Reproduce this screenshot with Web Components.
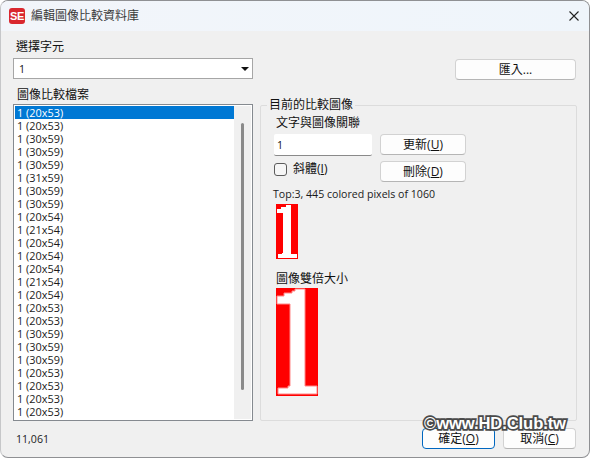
<!DOCTYPE html>
<html lang="zh-Hant">
<head>
<meta charset="utf-8">
<title>編輯圖像比較資料庫</title>
<style>
  html,body{margin:0;padding:0;background:#fff;}
  body{width:590px;height:458px;overflow:hidden;font:12px/14px "Open Sans","Noto Sans CJK TC",sans-serif;color:#111;}
  .u{text-decoration:underline;}
</style>
</head>
<body>
<se-dialog heading="編輯圖像比較資料庫">
  <se-panel>
    <se-label slot="left" style="padding-left:3px">選擇字元</se-label>
    <se-combo slot="left" value="1"></se-combo>
    <se-label slot="left" style="margin-top:9px;padding-left:4px">圖像比較檔案</se-label>
    <se-list slot="left" style="margin-top:2px"></se-list>

    <se-button slot="right" style="width:121px;margin:19px 1px 0 auto">匯入...</se-button>
    <se-group slot="right" legend="目前的比較圖像" style="margin-top:18px">
      <se-label style="margin-left:2px;margin-top:4px">文字與圖像關聯</se-label>
      <se-row style="margin-top:4px">
        <se-input value="1"></se-input>
        <se-button style="width:86px">更新(<span class="u">U</span>)</se-button>
      </se-row>
      <se-row style="margin-top:5px">
        <se-check>斜體(<span class="u">I</span>)</se-check>
        <se-button style="width:86px">刪除(<span class="u">D</span>)</se-button>
      </se-row>
      <se-label small style="margin-left:-1px;margin-top:5px">Top:3, 445 colored pixels of 1060</se-label>
      <se-bitmap style="margin:3px 0 0 2px"></se-bitmap>
      <se-label style="margin:13px 0 0 2px">圖像雙倍大小</se-label>
      <se-bitmap double style="margin:2px 0 0 2px"></se-bitmap>
    </se-group>

    <se-label slot="status" small>11,061</se-label>
    <se-button slot="actions" primary style="width:73px">確定(<span class="u">O</span>)</se-button>
    <se-button slot="actions" style="width:73px">取消(<span class="u">C</span>)</se-button>
  </se-panel>
  <se-watermark slot="overlay">©www.HD.Club.tw</se-watermark>
</se-dialog>

<script>
function def(name, css, html, init){
  customElements.define(name, class extends HTMLElement{
    constructor(){
      super();
      const r=this.attachShadow({mode:'open'});
      r.innerHTML='<style>'+css+'</style>'+(typeof html==='function'?html(this):html);
    }
    connectedCallback(){ if(init&&!this._i){this._i=1;init(this);} }
  });
}

def('se-dialog',`
  :host{display:block;position:relative;box-sizing:border-box;width:590px;height:458px;border:1px solid #8f9093;border-left-color:#c6c7c9;border-radius:8px;background:#f0f0f0;overflow:hidden;}
  .bar{display:flex;align-items:center;height:30px;background:linear-gradient(90deg,#f2f5fa,#eff5fb);}
  .logo{flex:none;display:flex;align-items:center;justify-content:center;width:16px;height:16px;margin:0 6px 0 8px;border-radius:3px;background:#d9272e;color:#fff;font:bold 11px/16px "Liberation Sans",sans-serif;letter-spacing:-.3px;}
  .title{flex:1;color:#3a3a3a;}
  svg{flex:none;margin-right:10px;}
`,h=>`<div class="bar"><span class="logo">SE</span><span class="title">${h.getAttribute('heading')}</span>
  <svg width="10" height="10" viewBox="0 0 10 10"><path d="M.5.5l9 9M9.5.5l-9 9" stroke="#222" stroke-width="1.1" fill="none"/></svg></div>
  <slot></slot><slot name="overlay"></slot>`);

def('se-panel',`
  :host{display:grid;grid-template-columns:240px 317px;column-gap:7px;padding:9px 0 0 12px;}
  .col{display:flex;flex-direction:column;min-width:0;}
  .foot{grid-column:1/3;display:flex;align-items:center;margin-top:7px;padding-left:3px;}
  .foot .s{flex:1;}
  .a{display:flex;gap:8px;margin-right:1px;}
  ::slotted(se-button){flex:none;}
`,`<div class="col"><slot name="left"></slot></div><div class="col"><slot name="right"></slot></div>
  <div class="foot"><div class="s"><slot name="status"></slot></div><div class="a"><slot name="actions"></slot></div></div>`);

def('se-label',`
  :host{display:block;line-height:14px;color:#111;}
  :host([small]){font-size:10.6px;color:#1a1a1a;}
`,`<slot></slot>`);

def('se-row',`:host{display:flex;align-items:flex-start;}`,`<slot></slot>`);

def('se-combo',`
  :host{display:flex;align-items:center;box-sizing:border-box;height:21px;margin-top:4px;padding:0 3px 0 5px;background:#fff;border:1px solid #a6a6a6;font-size:10.6px;}
  .v{flex:1;}
  i{width:0;height:0;border:4px solid transparent;border-top:4px solid #111;border-bottom:0;}
`,h=>`<span class="v">${h.getAttribute('value')}</span><i></i>`);

const sizes='20x53 20x53 30x59 30x59 30x59 31x59 30x59 30x59 20x54 21x54 20x54 20x54 20x54 21x54 20x54 20x53 20x53 30x59 30x59 30x59 20x53 20x53 20x53 20x53'.split(' ');
def('se-list',`
  :host{display:flex;box-sizing:border-box;height:317px;background:#fff;border:1px solid #858a90;padding:1px;overflow:hidden;font-size:10.9px;}
  .rows{width:219px;flex:none;}
  .r{height:13px;line-height:13px;padding-left:2px;color:#1a1a1a;white-space:nowrap;}
  .r.sel{background:#0078d4;color:#fff;}
  .track{flex:1;display:flex;justify-content:center;background:#f0f0f0;padding-top:17px;}
  .thumb{width:3px;height:267px;background:#8a8a8a;border-radius:2px;}
`,()=>`<div class="rows">${sizes.map((s,i)=>`<div class="r${i?'':' sel'}">1 (${s})</div>`).join('')}</div><div class="track"><div class="thumb"></div></div>`);

def('se-button',`
  :host{display:flex;align-items:center;justify-content:center;box-sizing:border-box;height:21px;background:#fdfdfd;border:1px solid #d2d2d2;border-bottom-color:#b5b5b5;border-radius:4px;color:#111;}
  :host([primary]){border:1px solid #0067c0;}
`,`<slot></slot>`);

def('se-group',`
  :host{display:block;}
  fieldset{box-sizing:border-box;height:323px;margin:0;padding:0;border:1px solid #dcdcdc;border-radius:2px;min-width:0;}
  legend{margin-left:6px;padding:0 2px;line-height:14px;color:#111;}
  .in{display:flex;flex-direction:column;align-items:flex-start;padding-left:13px;}
`,h=>`<fieldset><legend>${h.getAttribute('legend')}</legend><div class="in"><slot></slot></div></fieldset>`);

def('se-input',`
  :host{display:flex;align-items:center;box-sizing:border-box;width:98px;height:22px;margin-right:8px;padding-left:3px;background:#fff;border-bottom:1px solid #8a8a8a;border-radius:2px;font-size:10.6px;}
`,h=>`<span>${h.getAttribute('value')}</span>`);

def('se-check',`
  :host{display:flex;align-items:center;box-sizing:border-box;width:106px;height:16px;}
  i{flex:none;box-sizing:border-box;width:13px;height:13px;margin-right:6px;border:1px solid #5c5c5c;border-radius:3px;background:#f6f6f6;}
`,`<i></i><span><slot></slot></span>`);

def('se-bitmap',`
  :host{display:block;line-height:0;}
`,h=>h.hasAttribute('double')
  ?`<svg width="42" height="108" viewBox="0 0 42 108"><rect width="42" height="108" fill="#f00"/><polygon points="29,1 19,1 19,3 16,3 16,5 8,5 8,8 1,8 1,16 14,16 14,98 12,98 12,100 2,100 2,106 41,106 41,98 29,98" fill="#fff" stroke="#ff8a8a" stroke-width="1"/></svg>`
  :`<svg width="22" height="55" viewBox="0 0 22 55" shape-rendering="crispEdges"><rect width="22" height="55" fill="#f00"/><polygon points="15,1 10,1 10,3 5,3 5,5 1,5 1,9 7,9 7,49 6,49 6,50 2,50 2,54 21,54 21,50 15,50" fill="#fff"/></svg>`);

def('se-watermark',`
  :host{position:absolute;left:423px;top:413px;display:block;white-space:nowrap;font:bold 16.6px/20px "Liberation Sans",sans-serif;letter-spacing:-.1px;color:#fff;-webkit-text-stroke:3.4px #4a4a4a;paint-order:stroke fill;}
`,`<slot></slot>`);
</script>
</body>
</html>
